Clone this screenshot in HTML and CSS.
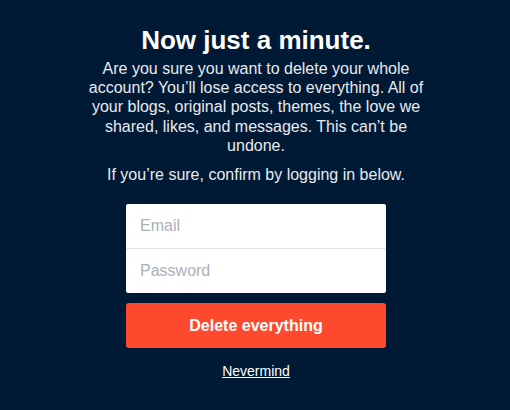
FILE: index.html
```html
<!DOCTYPE html>
<html>
<head>
<meta charset="utf-8">
<link rel="stylesheet" href="styles.css">
</head>
<body>
<main class="page">
  <h1 class="title">Now just a minute.</h1>
  <p class="lead">Are you sure you want to delete your whole account? You’ll lose access to everything. All of your blogs, original posts, themes, the love we shared, likes, and messages. This can’t be undone.</p>
  <p class="confirm">If you’re sure, confirm by logging in below.</p>
  <form class="form">
    <div class="fields">
      <input class="field" type="email" placeholder="Email">
      <input class="field" type="password" placeholder="Password">
    </div>
    <button class="delete" type="button">Delete everything</button>
  </form>
  <a class="nevermind" href="#">Nevermind</a>
</main>
</body>
</html>
```

FILE: styles.css
```css
html, body {
  margin: 0;
  padding: 0;
  background: #001935;
  height: 100%;
}
body {
  font-family: "Liberation Sans", Arial, sans-serif;
  color: #fff;
  padding-left: 2px;
  box-sizing: border-box;
}
.page {
  width: 344px;
  margin: 0 auto;
  padding-top: 24px;
  display: flex;
  flex-direction: column;
  align-items: center;
  text-align: center;
}
.title {
  margin: 0;
  font-size: 26px;
  line-height: 32px;
  font-weight: bold;
}
.lead {
  margin: 3px 0 0;
  font-size: 16px;
  line-height: 19.2px;
  color: #e8ebef;
}
.confirm {
  margin: 10px 0 0;
  font-size: 16px;
  line-height: 19.2px;
  color: #e8ebef;
}
.form {
  margin-top: 20px;
  width: 260px;
  display: flex;
  flex-direction: column;
  gap: 10px;
}
.fields {
  background: #fff;
  border-radius: 3px;
  display: flex;
  flex-direction: column;
  overflow: hidden;
}
.field {
  height: 44px;
  border: 0;
  padding: 0 14px;
  font-family: inherit;
  font-size: 16px;
  color: #333;
  background: #fff;
  outline: none;
}
.field + .field {
  border-top: 1px solid #e2e4e8;
}
.field::placeholder {
  color: #a9b0b8;
}
.delete {
  height: 45px;
  border: 0;
  border-radius: 3px;
  background: #ff492f;
  color: #fff;
  font-family: inherit;
  font-size: 16px;
  font-weight: bold;
}
.nevermind {
  margin-top: 14px;
  color: #fff;
  font-size: 14px;
  line-height: 18px;
}
```
